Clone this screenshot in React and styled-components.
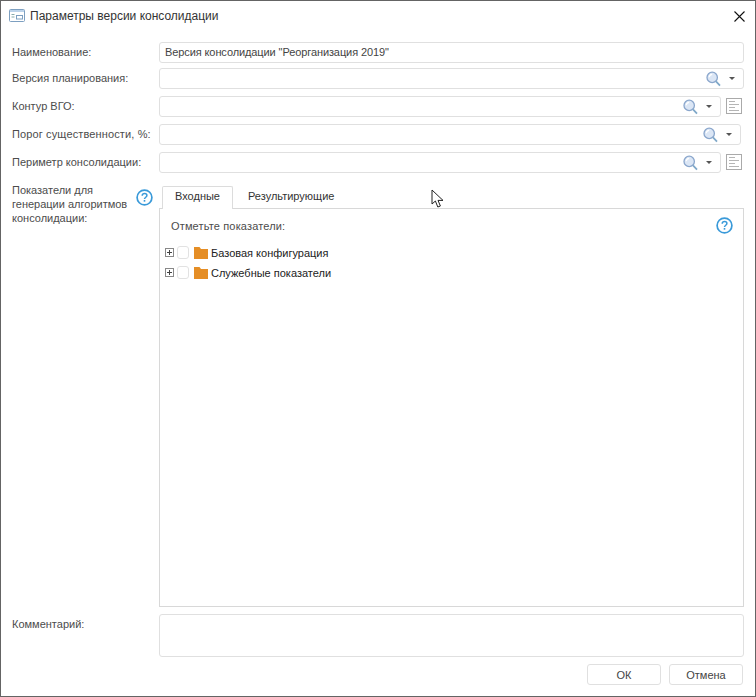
import styled, { createGlobalStyle } from "styled-components";

const GlobalStyle = createGlobalStyle`
  html, body { margin: 0; padding: 0; background: #fff; }
  body { font-family: "Liberation Sans", Arial, sans-serif; font-size: 11px; color: #444; }
`;

function HelpIcon() {
  return (
    <svg width="17" height="17" viewBox="0 0 17 17">
      <circle cx="8.5" cy="8.5" r="7.4" fill="#fff" stroke="#3a9ad9" strokeWidth="1.7" />
      <path d="M6.2 6.7c.1-1.4 1.1-2.1 2.4-2.1s2.3.8 2.3 1.9c0 1.8-2.4 1.7-2.4 3.6" fill="none" stroke="#3a9ad9" strokeWidth="1.5" />
      <rect x="7.7" y="11" width="1.6" height="1.7" fill="#3a9ad9" />
    </svg>
  );
}

function SearchIcon() {
  return (
    <svg width="15" height="16" viewBox="0 0 15 16">
      <circle cx="6.2" cy="6.4" r="5.2" fill="#dbe6f5" stroke="#8aa6cc" strokeWidth="1.3" />
      <path d="M3.2 6.2c.2-1.7 1.4-2.8 3-2.9" fill="none" stroke="#fff" strokeWidth="1.2" />
      <path d="M10 10.4l4 4.2" stroke="#7fa8c9" strokeWidth="1.8" />
    </svg>
  );
}

function LookupInput({ width, withList }) {
  return (
    <LookupRow>
      <LookupField $width={width}>
        <SearchIcon />
        <Caret />
      </LookupField>
      {withList && (
        <ListButton>
          <svg width="17" height="17" viewBox="0 0 17 17">
            <rect x="0.5" y="0.5" width="15" height="15" fill="#fff" stroke="#aaa" />
            <path d="M3 3.5h6M3 6.5h10M3 9.5h6M3 12.5h10" stroke="#b5b5b5" />
          </svg>
        </ListButton>
      )}
    </LookupRow>
  );
}

function TreeItem({ label }) {
  return (
    <TreeRow>
      <Expander>
        <svg width="9" height="9" viewBox="0 0 9 9">
          <rect x="0.5" y="0.5" width="8" height="8" fill="#fff" stroke="#888" />
          <path d="M2 4.5h5M4.5 2v5" stroke="#444" />
        </svg>
      </Expander>
      <Check />
      <svg width="14" height="12" viewBox="0 0 14 12">
        <path d="M0 0h5.5l1.5 2h7v10H0z" fill="#e58e26" />
      </svg>
      <TreeLabel>{label}</TreeLabel>
    </TreeRow>
  );
}

export default function App() {
  return (
    <Dialog>
      <GlobalStyle />
      <TitleBar>
        <svg width="16" height="14" viewBox="0 0 16 14">
          <rect x="0.5" y="0.5" width="15" height="12" rx="1" fill="#fff" stroke="#7d9fc0" />
          <rect x="1" y="1" width="14" height="2" fill="#bcd3ea" />
          <path d="M2.5 5.5h3M2.5 8h3" stroke="#8aa" />
          <rect x="7.5" y="6.5" width="6" height="3.5" fill="#fff" stroke="#7d9fc0" />
        </svg>
        <Title>Параметры версии консолидации</Title>
        <CloseButton aria-label="Закрыть">
          <svg width="11" height="11" viewBox="0 0 11 11">
            <path d="M0.5 0.5l10 10M10.5 0.5l-10 10" stroke="#111" strokeWidth="1.1" />
          </svg>
        </CloseButton>
      </TitleBar>

      <Form>
        <Row $height={26}>
          <Label>Наименование:</Label>
          <TextInput>Версия консолидации "Реорганизация 2019"</TextInput>
        </Row>
        <Row $height={28}>
          <Label>Версия планирования:</Label>
          <LookupInput width={585} />
        </Row>
        <Row $height={28}>
          <Label>Контур ВГО:</Label>
          <LookupInput width={562} withList />
        </Row>
        <Row $height={28}>
          <Label $wide>Порог существенности, %:</Label>
          <LookupInput width={582} />
        </Row>
        <Row $height={34}>
          <Label>Периметр консолидации:</Label>
          <LookupInput width={562} withList />
        </Row>

        <MainRow>
          <IndicatorsLabel>
            <span>Показатели для генерации алгоритмов консолидации:</span>
            <HelpSlot>
              <HelpIcon />
            </HelpSlot>
          </IndicatorsLabel>
          <TabsArea>
            <Tabs>
              <Tab $active>Входные</Tab>
              <Tab>Результирующие</Tab>
            </Tabs>
            <Panel>
              <PanelHead>
                <PanelHint>Отметьте показатели:</PanelHint>
                <HelpIcon />
              </PanelHead>
              <Tree>
                <TreeItem label="Базовая конфигурация" />
                <TreeItem label="Служебные показатели" />
              </Tree>
            </Panel>
          </TabsArea>
        </MainRow>

        <CommentRow>
          <Label>Комментарий:</Label>
          <CommentBox />
        </CommentRow>

        <Footer>
          <FooterButton>ОК</FooterButton>
          <FooterButton>Отмена</FooterButton>
        </Footer>
      </Form>

      <Cursor width="14" height="20" viewBox="0 0 14 20">
        <path d="M1 1v14l3.4-3 2.4 6 2.6-1-2.4-5.6H12z" fill="#fff" stroke="#222" strokeWidth="1" />
      </Cursor>
    </Dialog>
  );
}

const Dialog = styled.div`
  position: relative;
  box-sizing: border-box;
  width: 756px;
  height: 697px;
  border: 1px solid #646464;
  background: #fff;
`;

const TitleBar = styled.div`
  display: flex;
  align-items: center;
  gap: 5px;
  height: 30px;
  padding: 0 10px 0 8px;
`;

const Title = styled.div`
  flex: 1;
  font-size: 12px;
  color: #333;
`;

const CloseButton = styled.button`
  display: flex;
  padding: 0;
  border: 0;
  background: none;
`;

const Form = styled.div`
  padding: 11px 11px 0 11px;
`;

const Row = styled.div`
  display: flex;
  height: ${(p) => p.$height}px;
`;

const Label = styled.div`
  width: 147px;
  padding-top: 3px;
  line-height: 14px;
  color: #4c4c4c;
  white-space: nowrap;
  letter-spacing: ${(p) => (p.$wide ? "0.13px" : "0")};
`;

const TextInput = styled.div`
  box-sizing: border-box;
  width: 585px;
  height: 21px;
  padding: 0 5px;
  border: 1px solid #e0e0e0;
  border-radius: 3px;
  line-height: 19px;
  letter-spacing: -0.1px;
  color: #444;
`;

const LookupRow = styled.div`
  display: flex;
  gap: 5px;
  height: 21px;
`;

const LookupField = styled.div`
  box-sizing: border-box;
  display: flex;
  align-items: center;
  justify-content: flex-end;
  gap: 8px;
  width: ${(p) => p.$width}px;
  padding-right: 8px;
  border: 1px solid #e0e0e0;
  border-radius: 3px;
`;

const Caret = styled.span`
  width: 0;
  height: 0;
  border-left: 3px solid transparent;
  border-right: 3px solid transparent;
  border-top: 3px solid #555;
`;

const ListButton = styled.div`
  display: flex;
  align-items: center;
`;

const MainRow = styled.div`
  display: flex;
  height: 428px;
`;

const IndicatorsLabel = styled.div`
  display: flex;
  width: 147px;
  line-height: 14px;
  color: #4c4c4c;

  span {
    width: 124px;
    margin-top: -3px;
  }
`;

const HelpSlot = styled.div`
  padding-top: 3px;
`;

const TabsArea = styled.div`
  display: flex;
  flex-direction: column;
  width: 585px;
`;

const Tabs = styled.div`
  display: flex;
  padding-left: 3px;
  height: 22px;
`;

const Tab = styled.div`
  box-sizing: border-box;
  height: ${(p) => (p.$active ? 23 : 22)}px;
  padding: ${(p) => (p.$active ? "0 12px" : "1px 15px 0")};
  line-height: 19px;
  color: #333;
  background: #fff;
  position: relative;
  z-index: 1;
  border: ${(p) => (p.$active ? "1px solid #dcdcdc" : "0")};
  border-bottom: 0;
  border-radius: 2px 2px 0 0;
`;

const Panel = styled.div`
  box-sizing: border-box;
  height: 399px;
  border: 1px solid #d8d8d8;
`;

const PanelHead = styled.div`
  display: flex;
  align-items: center;
  justify-content: space-between;
  height: 17px;
  margin-top: 8px;
  padding: 0 10px 0 11px;
`;

const PanelHint = styled.span`
  padding-top: 1px;
  color: #4c4c4c;
  letter-spacing: 0.15px;
`;

const Tree = styled.div`
  display: flex;
  flex-direction: column;
  gap: 5px;
  margin-top: 11px;
  padding-left: 5px;
`;

const TreeRow = styled.div`
  display: flex;
  align-items: center;
  height: 15px;
`;

const Expander = styled.span`
  display: flex;
  width: 12px;
`;

const Check = styled.span`
  box-sizing: border-box;
  width: 12px;
  height: 13px;
  margin-right: 5px;
  border: 1px solid #e2e2e2;
  border-radius: 3px;
`;

const TreeLabel = styled.span`
  margin-left: 3px;
  color: #222;
`;

const CommentRow = styled.div`
  display: flex;
  height: 50px;
`;

const CommentBox = styled.div`
  box-sizing: border-box;
  width: 585px;
  height: 43px;
  border: 1px solid #e0e0e0;
  border-radius: 3px;
`;

const Footer = styled.div`
  display: flex;
  justify-content: flex-end;
  gap: 8px;
  padding-right: 1px;
`;

const FooterButton = styled.button`
  box-sizing: border-box;
  width: 74px;
  height: 21px;
  padding: 0;
  border: 1px solid #e0e0e0;
  border-radius: 3px;
  background: #fff;
  font: inherit;
  color: #444;
`;

const Cursor = styled.svg`
  position: absolute;
  left: 430px;
  top: 188px;
`;
